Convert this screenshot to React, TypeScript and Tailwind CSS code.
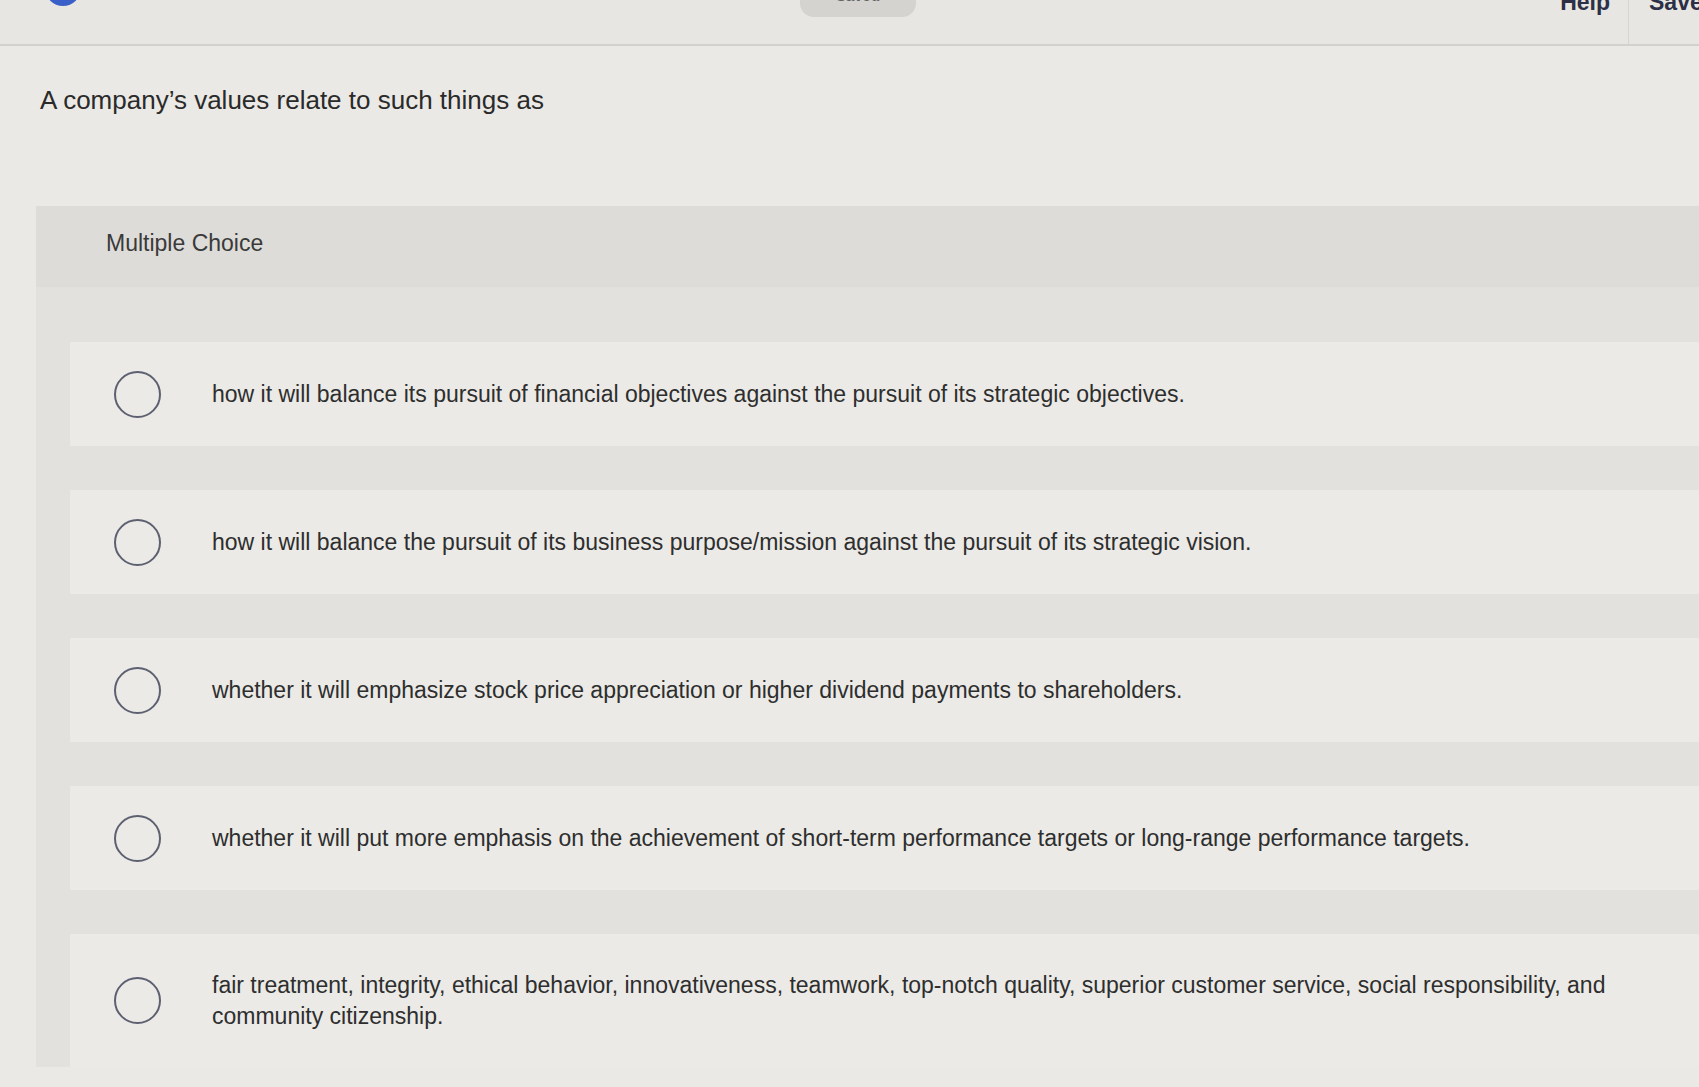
const options = [
  "how it will balance its pursuit of financial objectives against the pursuit of its strategic objectives.",
  "how it will balance the pursuit of its business purpose/mission against the pursuit of its strategic vision.",
  "whether it will emphasize stock price appreciation or higher dividend payments to shareholders.",
  "whether it will put more emphasis on the achievement of short-term performance targets or long-range performance targets.",
  "fair treatment, integrity, ethical behavior, innovativeness, teamwork, top-notch quality, superior customer service, social responsibility, and community citizenship.",
];

export default function App() {
  return (
    <div
      className="min-h-screen bg-[#eae9e5] text-[#2e2e2e] overflow-hidden"
      style={{ fontFamily: '"Liberation Sans", Arial, sans-serif' }}
    >
      <div className="h-[46px] border-b-2 border-[#d2d1cd] bg-[#e7e6e2] overflow-hidden">
        <div className="flex items-start -mt-[26px]">
          <div className="ml-[45px] -mt-[12px] w-[36px] h-[44px] rounded-full bg-[#3a5fc8]" />
          <div className="ml-[719px] mt-[2px] w-[116px] h-[41px] rounded-[14px] bg-[#d4d3cf] flex items-end justify-center pb-[12px] text-[15px] leading-[18px] font-bold text-[#666]">
            Saved
          </div>
          <div className="ml-auto flex items-start">
            <span className="mt-[11px] text-[23px] font-bold text-[#2c2f45]">Help</span>
            <div className="ml-[18px] w-px h-[70px] bg-[#d6d5d1]" />
            <span className="ml-[20px] mt-[11px] w-[50px] text-[23px] font-bold text-[#2c2f45] whitespace-nowrap">
              Save
            </span>
          </div>
        </div>
      </div>

      <div className="pl-[36px]">
        <p className="pl-[4px] pt-[38px] text-[26px] leading-[32px] text-[#2a2a2a]">
          A company’s values relate to such things as
        </p>

        {/* Multiple choice panel */}
        <div className="mt-[90px] bg-[#e2e1dd]">
          <div className="h-[81px] pl-[70px] pb-[6px] flex items-center bg-[#dddcd8]">
            <span className="text-[23px] text-[#3a3a3a]">Multiple Choice</span>
          </div>

          <div className="pt-[55px] pl-[34px] flex flex-col gap-[44px]">
            {options.map((text, i) => (
              <div
                key={i}
                className={`flex items-center bg-[#ebeae6] pl-[44px] ${
                  i === 4 ? "min-h-[133px]" : "h-[104px]"
                }`}
              >
                <div className="shrink-0 w-[47px] h-[47px] rounded-full border-2 border-[#5d6070]" />
                <p className="ml-[51px] max-w-[1420px] text-[23px] leading-[31px] text-[#2e2e2e]">{text}</p>
              </div>
            ))}
          </div>
        </div>
      </div>
    </div>
  );
}
